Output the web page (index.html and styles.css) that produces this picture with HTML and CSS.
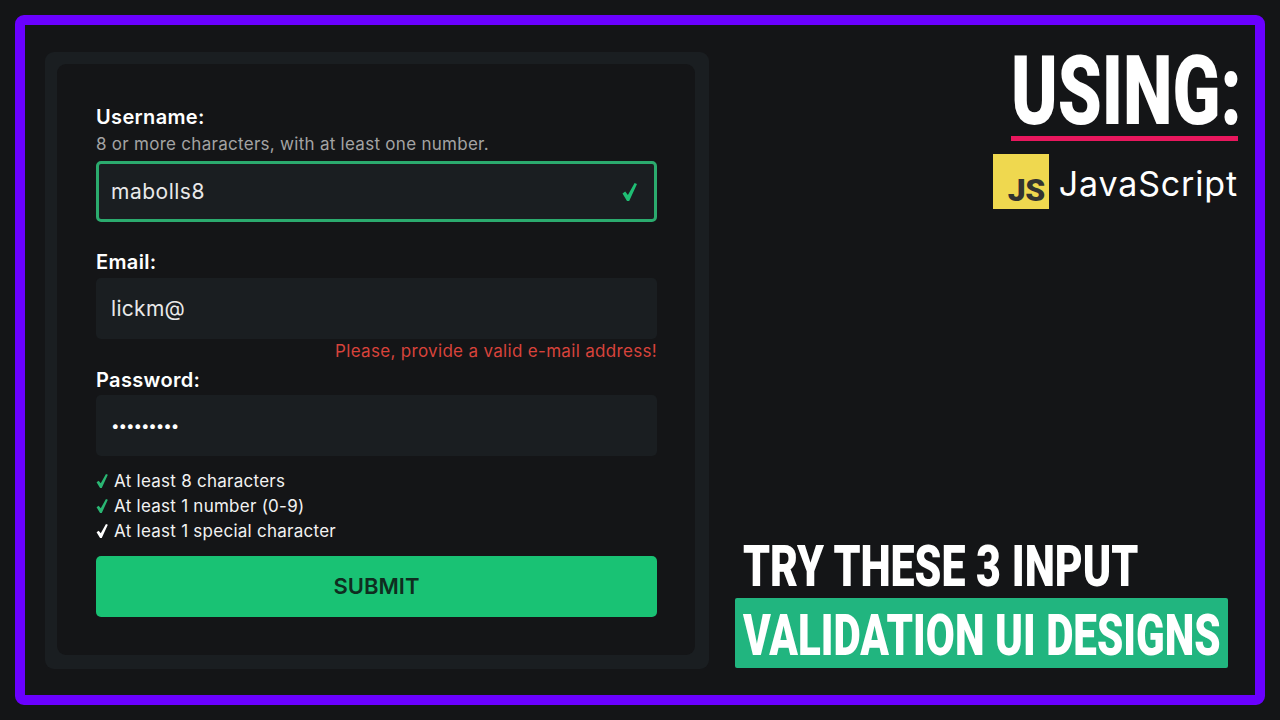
FILE: index.html
```html
<!DOCTYPE html>
<html lang="en">
<head>
<meta charset="utf-8">
<title>Input validation UI</title>
<link rel="stylesheet" href="styles.css">
</head>
<body>
<div class="frame">
  <section class="panel">
    <form class="card">
      <label class="label" for="u">Username:</label>
      <p class="hint">8 or more characters, with at least one number.</p>
      <div class="field">
        <input class="input valid" id="u" type="text" value="mabolls8">
        <svg class="field-check" viewBox="0 0 15 18"><path d="M0.5 10.6 L3.2 8.6 L5.9 12 L12.6 0 L15 1.1 L7.2 18 L5 18 Z"/></svg>
      </div>
      <label class="label gap" for="e">Email:</label>
      <div class="field tight">
        <input class="input" id="e" type="text" value="lickm@">
      </div>
      <p class="error">Please, provide a valid e-mail address!</p>
      <label class="label gap-small" for="p">Password:</label>
      <div class="field tighter">
        <input class="input dots" id="p" type="text" value="•••••••••">
      </div>
      <ul class="rules">
        <li class="rule ok"><svg viewBox="0 0 15 18"><path d="M0.5 10.6 L3.2 8.6 L5.9 12 L12.6 0 L15 1.1 L7.2 18 L5 18 Z"/></svg>At least 8 characters</li>
        <li class="rule ok"><svg viewBox="0 0 15 18"><path d="M0.5 10.6 L3.2 8.6 L5.9 12 L12.6 0 L15 1.1 L7.2 18 L5 18 Z"/></svg>At least 1 number (0-9)</li>
        <li class="rule"><svg viewBox="0 0 15 18"><path d="M0.5 10.6 L3.2 8.6 L5.9 12 L12.6 0 L15 1.1 L7.2 18 L5 18 Z"/></svg>At least 1 special character</li>
      </ul>
      <button class="submit" type="button">SUBMIT</button>
    </form>
  </section>
  <aside class="side">
    <div class="using">
      <h1 class="using-title"><span>USING:</span></h1>
      <div class="using-bar"></div>
      <div class="tech">
        <div class="js-logo"><span>JS</span></div>
        <span class="tech-name">JavaScript</span>
      </div>
    </div>
    <div class="promo">
      <h2 class="promo-line"><span>TRY THESE 3 INPUT</span></h2>
      <h2 class="promo-box"><span>VALIDATION UI DESIGNS</span></h2>
    </div>
  </aside>
</div>
</body>
</html>
```
FILE: styles.css
```css
* { box-sizing: border-box; margin: 0; padding: 0; }
html, body { height: 100%; }
body {
  background: #141517;
  padding: 15px;
  font-family: Inter, "Noto Sans", sans-serif;
  color: #fff;
  overflow: hidden;
}
.frame {
  height: 690px;
  border: 10px solid #6a00ff;
  border-radius: 9px;
  padding: 27px 17px 26px 20px;
  display: flex;
  gap: 26px;
}
.panel {
  width: 664px;
  flex: none;
  background: #1a1e21;
  border-radius: 9px;
  padding: 12px 14px 14px 12px;
}
.card {
  height: 100%;
  background: #141517;
  border-radius: 9px;
  padding: 41px 38px 0 39px;
}
.label {
  display: block;
  font-size: 20px;
  font-weight: 600;
  line-height: 24px;
  letter-spacing: 0.35px;
}
.gap { margin-top: 28px; }
.gap-small { margin-top: 5px; }
.hint {
  font-size: 17px;
  line-height: 24px;
  color: #a3a3a3;
  margin-top: 3px;
  letter-spacing: 0.28px;
}
.field { position: relative; margin-top: 5px; }
.field.tight { margin-top: 4px; }
.field.tighter { margin-top: 3px; }
.input {
  display: block;
  width: 100%;
  height: 61px;
  background: #1a1e21;
  border: 0;
  border-radius: 5px;
  padding: 0 15px;
  font: 400 21px Inter, sans-serif;
  letter-spacing: 0.3px;
  color: #e9e9e9;
  outline: 0;
}
.input.valid {
  border: 3px solid #2bab6e;
  padding: 0 12px;
  letter-spacing: 0.5px;
}
.input.dots {
  font-size: 15px;
  font-weight: 800;
  letter-spacing: 0.9px;
  color: #fff;
  padding-left: 16px;
}
.field-check {
  position: absolute;
  right: 20px;
  top: 22px;
  width: 15px;
  height: 18px;
  fill: #1fbe74;
}
.error {
  font-size: 17px;
  line-height: 24px;
  color: #d8433b;
  text-align: right;
  letter-spacing: 0.32px;
}
.rules { list-style: none; margin-top: 12px; }
.rule {
  display: flex;
  align-items: center;
  height: 25px;
  font-size: 17px;
  letter-spacing: 0.26px;
  color: #f2f2f2;
}
.rule svg { width: 12px; height: 14px; margin: 1px 6px 0 0; fill: #fff; flex: none; }
.rule.ok svg { fill: #2ab673; }
.submit {
  display: block;
  width: 100%;
  height: 61px;
  margin-top: 13px;
  padding-bottom: 2px;
  background: #19c274;
  border: 0;
  border-radius: 5px;
  font: 600 22px Inter, sans-serif;
  color: #0f2d20;
}
.side {
  flex: 1;
  min-width: 0;
  display: flex;
  flex-direction: column;
  justify-content: space-between;
}
.using {
  display: flex;
  flex-direction: column;
  align-items: flex-end;
}
.using-title {
  width: 229px;
  height: 84px;
  margin-right: -4px;
  display: flex;
  justify-content: flex-end;
  font: 900 96px/78px Roboto, sans-serif;
  white-space: nowrap;
}
.using-title span {
  flex: none;
  height: 78px;
  transform-origin: 100% 50%;
  transform: scaleX(0.733);
}
.using-bar { width: 227px; height: 5px; background: #e8175d; }
.tech { display: flex; align-items: center; gap: 10px; margin-top: 13px; }
.js-logo {
  width: 56px;
  height: 55px;
  background: #efd84f;
  display: flex;
  align-items: flex-end;
  justify-content: flex-end;
  padding: 0 4px 0 0;
  color: #323330;
  font: 900 32px/37px Roboto, sans-serif;
  letter-spacing: -0.5px;
}
.tech-name { font-size: 34px; letter-spacing: 0.85px; color: #fff; margin-top: 4px; }
.promo { margin-bottom: 1px; width: 493px; }
.promo-line, .promo-box {
  display: flex;
  justify-content: flex-end;
  font: 900 57px/1 Roboto, sans-serif;
  white-space: nowrap;
}
.promo-line { height: 58px; line-height: 53px; padding-right: 90px; }
.promo-line span {
  flex: none;
  height: 53px;
  transform-origin: 100% 50%;
  transform: scaleX(0.7525);
}
.promo-box span {
  flex: none;
  height: 57px;
  transform-origin: 100% 50%;
  transform: scaleX(0.7386);
}
.promo-box {
  height: 70px;
  padding: 9px 7px 0;
  background: #21b57f;
  border-radius: 2px;
}
```
